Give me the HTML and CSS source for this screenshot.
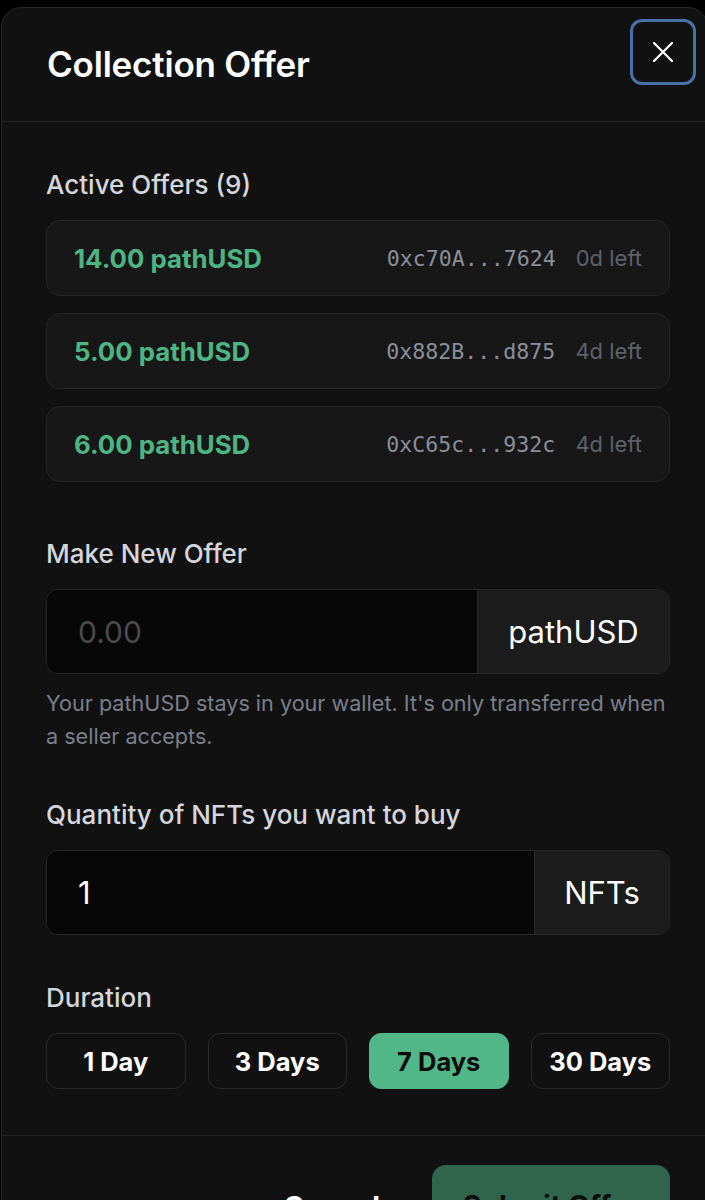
FILE: index.html
```html
<!DOCTYPE html>
<html lang="en">
<head>
<meta charset="utf-8">
<title>Collection Offer</title>
<link rel="stylesheet" href="styles.css">
</head>
<body>
<div class="modal">
  <header class="modal-header">
    <h1 class="title">Collection Offer</h1>
    <button class="close" aria-label="Close">
      <svg width="24" height="24" viewBox="0 0 24 24" fill="none" stroke="#fff" stroke-width="2.2" stroke-linecap="round"><path d="M3 3 L21 21 M21 3 L3 21"/></svg>
    </button>
  </header>
  <main class="modal-body">
    <section class="section">
      <h2 class="label">Active Offers (9)</h2>
      <ul class="offers">
        <li class="offer"><span class="amount">14.00 pathUSD</span><span class="meta"><span class="addr">0xc70A...7624</span><span class="left">0d left</span></span></li>
        <li class="offer"><span class="amount">5.00 pathUSD</span><span class="meta"><span class="addr">0x882B...d875</span><span class="left">4d left</span></span></li>
        <li class="offer"><span class="amount">6.00 pathUSD</span><span class="meta"><span class="addr">0xC65c...932c</span><span class="left">4d left</span></span></li>
      </ul>
    </section>
    <section class="section sec-offer">
      <h2 class="label">Make New Offer</h2>
      <div class="input-group">
        <span class="input placeholder">0.00</span>
        <span class="addon addon-usd">pathUSD</span>
      </div>
      <p class="help">Your pathUSD stays in your wallet. It's only transferred when a seller accepts.</p>
    </section>
    <section class="section sec-qty">
      <h2 class="label">Quantity of NFTs you want to buy</h2>
      <div class="input-group">
        <span class="input">1</span>
        <span class="addon addon-nft">NFTs</span>
      </div>
    </section>
    <section class="section sec-dur">
      <h2 class="label">Duration</h2>
      <div class="durations">
        <button class="dur">1 Day</button>
        <button class="dur">3 Days</button>
        <button class="dur active">7 Days</button>
        <button class="dur">30 Days</button>
      </div>
    </section>
  </main>
  <footer class="modal-footer">
    <button class="btn-cancel">Cancel</button>
    <button class="btn-submit">Submit Offer</button>
  </footer>
</div>
</body>
</html>
```

FILE: styles.css
```css
* { box-sizing: border-box; }
html, body {
  margin: 0;
  padding: 0;
  background: #000;
  width: 705px;
  height: 1200px;
  overflow: hidden;
}
body {
  font-family: Inter, "Noto Sans", sans-serif;
  color: #fff;
}
.modal {
  margin: 7px 0 0 1px;
  width: 707px;
  background: #111111;
  border: 1px solid #262626;
  border-radius: 20px;
  min-height: 1300px;
}
.modal-header {
  display: flex;
  justify-content: space-between;
  align-items: flex-start;
  height: 114px;
  padding: 11px 11px 0 45px;
  border-bottom: 1px solid #242424;
}
.title {
  margin: 25px 0 0;
  font-size: 35px;
  line-height: 40px;
  font-weight: 600;
  letter-spacing: -0.2px;
}
.close {
  width: 66px;
  height: 66px;
  border: 3px solid #4672a8;
  border-radius: 12px;
  background: #111;
  display: flex;
  align-items: center;
  justify-content: center;
  padding: 0;
}
.close svg { width: 24px; height: 24px; }
.modal-body {
  padding: 48px 37px 46px 44px;
}
.section { margin: 0; }
.sec-offer { margin-top: 57px; }
.sec-qty { margin-top: 47px; }
.sec-dur { margin-top: 48px; }
.label {
  margin: 0 0 20px;
  font-size: 26px;
  line-height: 30px;
  font-weight: 500;
  color: #d4d6dc;
}
.offers {
  list-style: none;
  margin: 0;
  padding: 0;
  display: flex;
  flex-direction: column;
  gap: 17px;
}
.offer {
  height: 76px;
  display: flex;
  align-items: center;
  justify-content: space-between;
  padding: 0 27px 0 27px;
  background: #171717;
  border: 1px solid #262626;
  border-radius: 14px;
}
.amount {
  color: #4db584;
  font-weight: 700;
  font-size: 25.8px;
}
.meta {
  display: flex;
  align-items: baseline;
  gap: 20px;
}
.addr {
  font-family: "DejaVu Sans Mono", "Liberation Mono", monospace;
  font-size: 21.6px;
  color: #8a8f9b;
}
.left {
  font-size: 22px;
  color: #5d626d;
}
.input-group {
  display: flex;
  height: 85px;
  border: 1px solid #262626;
  border-radius: 12px;
  overflow: hidden;
}
.input {
  flex: 1;
  display: flex;
  align-items: center;
  padding-left: 31px;
  background: #070707;
  font-size: 31px;
  color: #fff;
}
.placeholder { color: #4b4b4b; font-size: 30px; }
.addon {
  display: flex;
  align-items: center;
  justify-content: center;
  background: #1c1c1c;
  border-left: 1px solid #2a2a2a;
  font-size: 31px;
  color: #fff;
}
.addon-usd { width: 192px; }
.addon-nft { width: 135px; }
.help {
  margin: 13px 0 0;
  font-size: 21.6px;
  line-height: 33px;
  color: #7a7f8c;
}
.durations {
  display: grid;
  grid-template-columns: repeat(4, 1fr);
  gap: 22px;
}
.dur {
  height: 56px;
  border: 1px solid #2a2a2a;
  border-radius: 12px;
  background: #111;
  color: #fff;
  font-family: inherit;
  font-size: 25.5px;
  font-weight: 700;
  padding: 0;
}
.dur.active {
  background: #52b788;
  border-color: #52b788;
  color: #0a0a0a;
}
.modal-footer {
  border-top: 1px solid #242424;
  display: flex;
  justify-content: flex-end;
  align-items: flex-start;
  gap: 22px;
  padding: 29px 37px 0 44px;
}
.btn-cancel {
  background: transparent;
  border: none;
  color: #fff;
  font-family: inherit;
  font-size: 28.5px;
  font-weight: 700;
  height: 62px;
  padding: 0 30px;
  margin-top: 10px;
}
.btn-submit {
  width: 238px;
  height: 62px;
  background: #52b788;
  opacity: 0.5;
  border: none;
  border-radius: 14px;
  color: #0a0a0a;
  font-family: inherit;
  font-size: 28.5px;
  font-weight: 700;
  padding-top: 20px;
}
```
